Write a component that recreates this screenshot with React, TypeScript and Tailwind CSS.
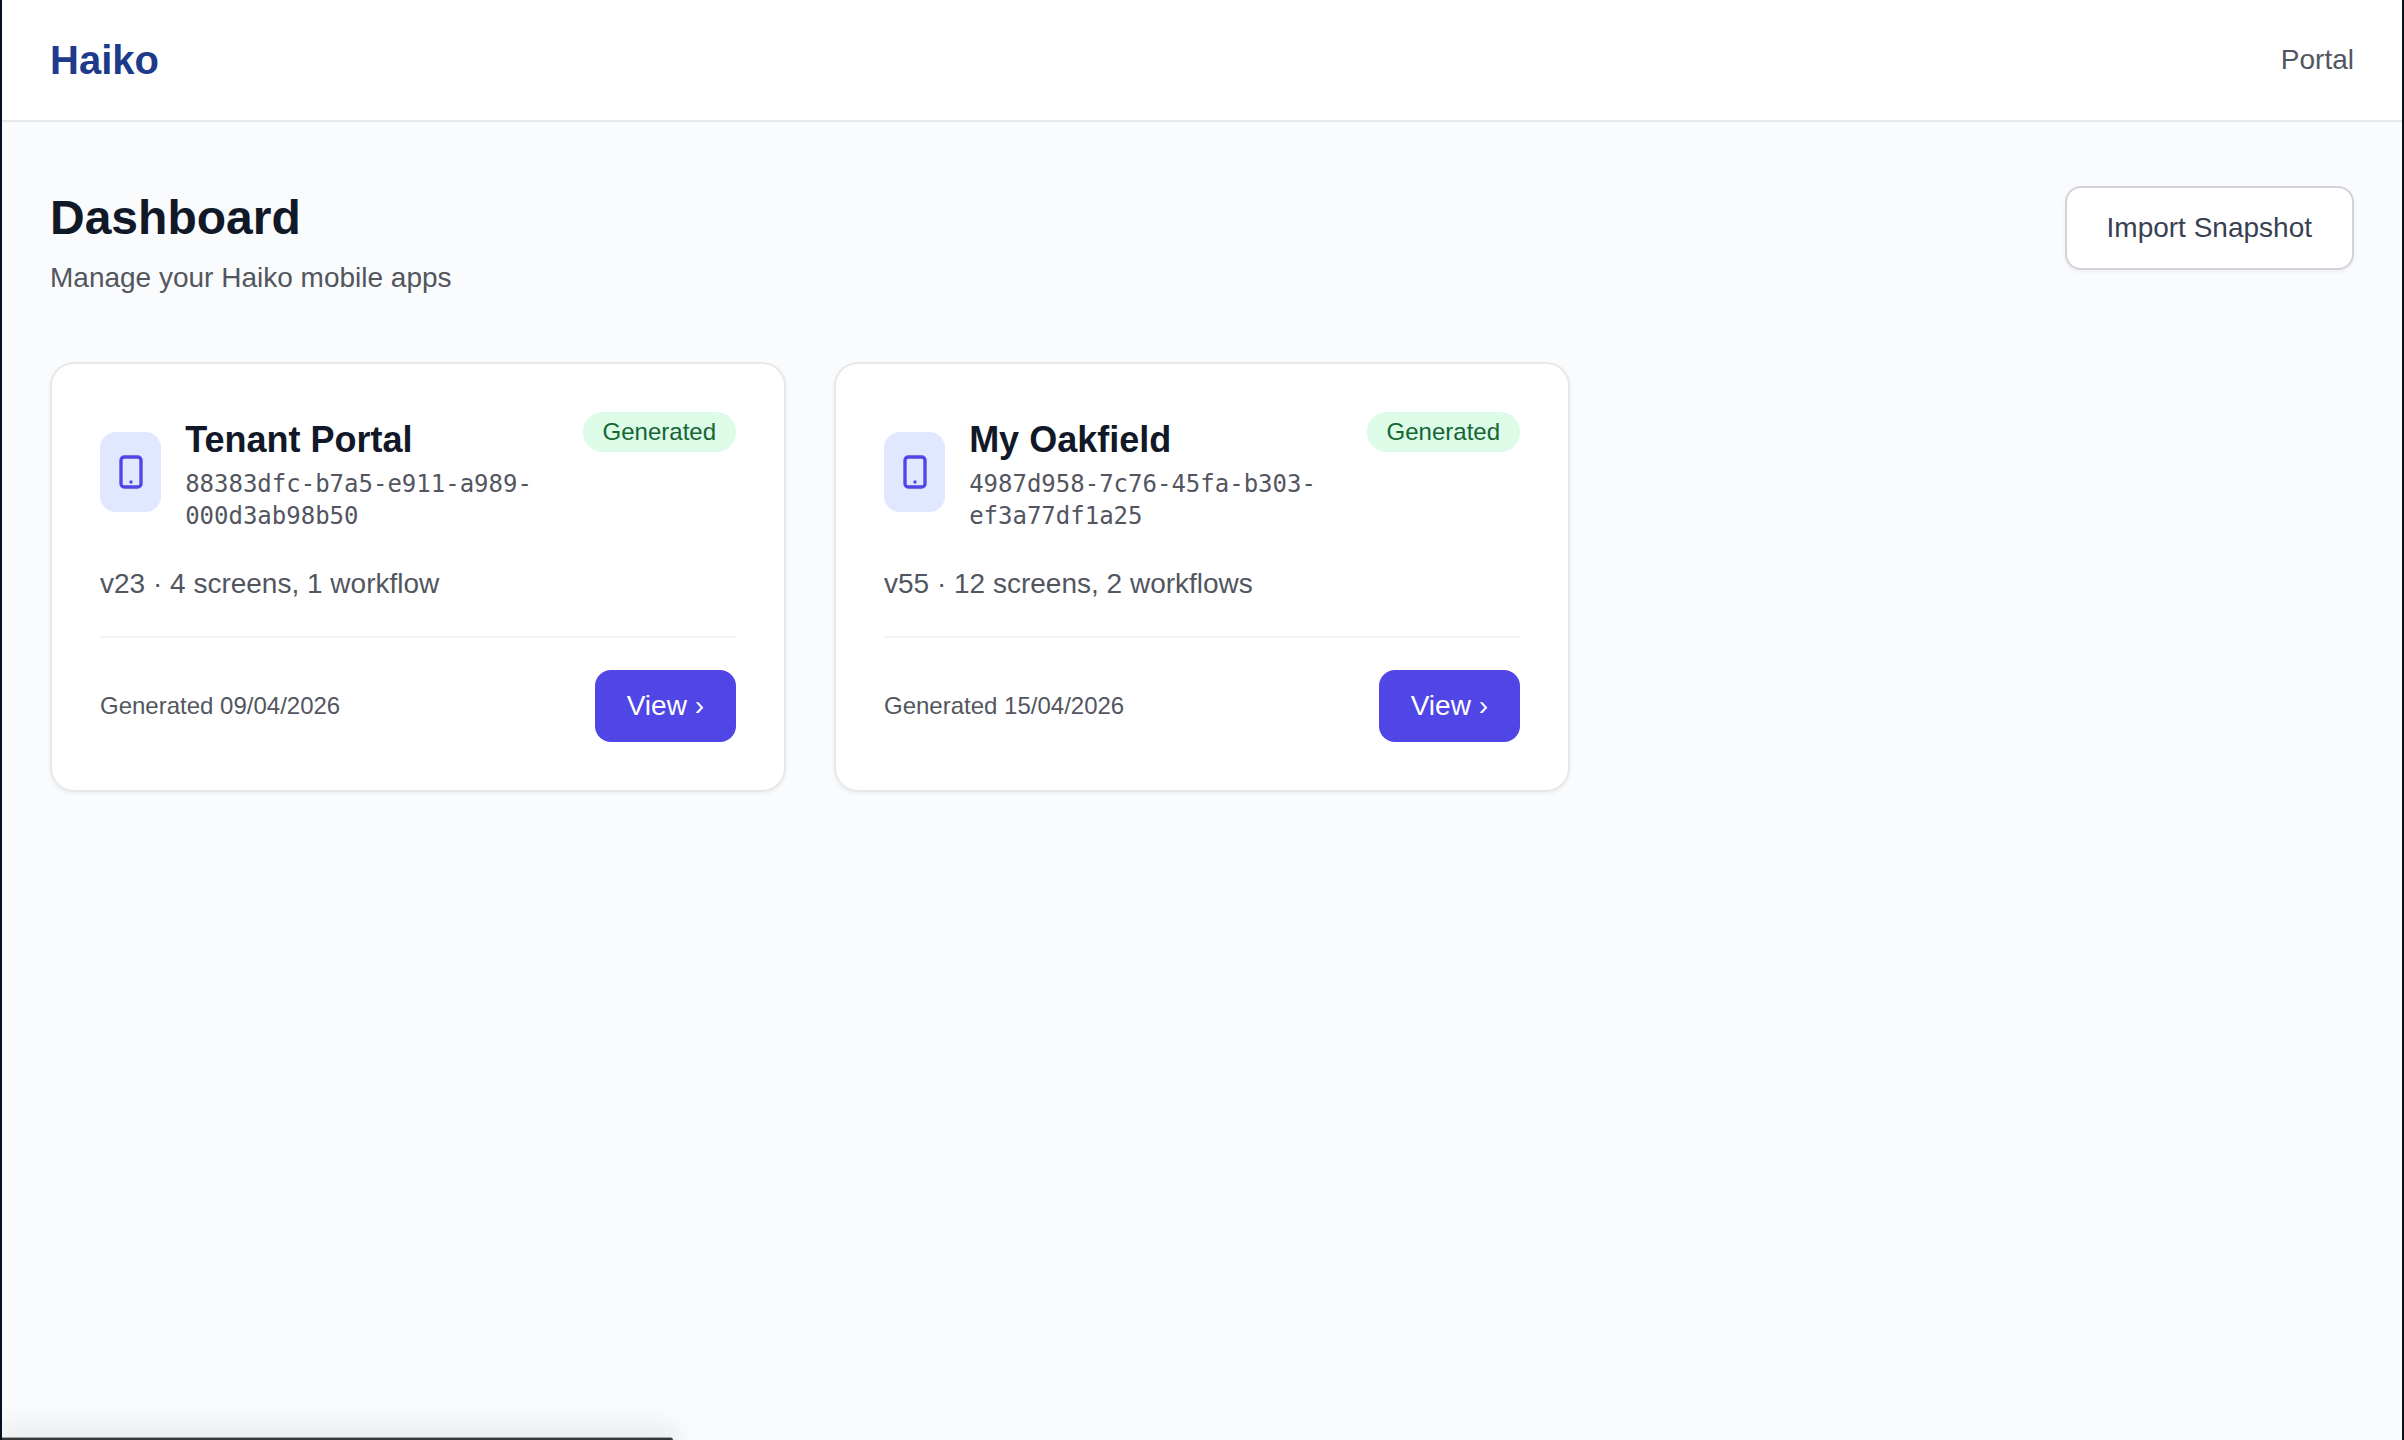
import * as React from "react";

interface AppInfo {
  name: string;
  id: string;
  version: number;
  summary: string;
  status: string;
  generatedOn: string;
}

const apps: AppInfo[] = [
  {
    name: "Tenant Portal",
    id: "88383dfc-b7a5-e911-a989-000d3ab98b50",
    version: 23,
    summary: "4 screens, 1 workflow",
    status: "Generated",
    generatedOn: "09/04/2026",
  },
  {
    name: "My Oakfield",
    id: "4987d958-7c76-45fa-b303-ef3a77df1a25",
    version: 55,
    summary: "12 screens, 2 workflows",
    status: "Generated",
    generatedOn: "15/04/2026",
  },
];

const PhoneIcon: React.FC = () => (
  <svg
    className="size-10 shrink-0 text-[#4f46e5]"
    viewBox="0 0 24 24"
    fill="none"
    stroke="currentColor"
    strokeWidth={2}
    strokeLinecap="round"
    strokeLinejoin="round"
    aria-hidden="true"
  >
    <path d="M12 18h.01M8 21h8a2 2 0 002-2V5a2 2 0 00-2-2H8a2 2 0 00-2 2v14a2 2 0 002 2z" />
  </svg>
);

const AppCard: React.FC<{ app: AppInfo }> = ({ app }) => (
  <article className="rounded-3xl border-2 border-[#e7e8ea] bg-white p-12 shadow-[0_2px_4px_rgba(0,0,0,0.05)]">
    <div className="flex items-start justify-between">
      <div className="flex items-center gap-6">
        <div className="flex h-20 w-20 items-center justify-center rounded-2xl bg-[#e0e7ff]">
          <PhoneIcon />
        </div>
        <div>
          <h2 className="text-[36px] leading-14 font-bold text-[#111827]">{app.name}</h2>
          <p className="font-['DejaVu_Sans_Mono',monospace] text-2xl leading-8 text-[#52565f]">{app.id}</p>
        </div>
      </div>
      <span className="rounded-full bg-[#dcfce7] px-5 py-1 text-2xl leading-8 text-[#166534]">{app.status}</span>
    </div>

    <p className="mt-8 text-[28px] leading-10 text-[#52565f]">
      v{app.version} · {app.summary}
    </p>

    <div className="mt-8 flex items-center justify-between border-t-2 border-[#f1f2f3] pt-8">
      <span className="text-2xl leading-8 text-[#52565f]">Generated {app.generatedOn}</span>
      <button type="button" className="rounded-2xl bg-[#4f46e5] px-8 py-4 text-[28px] leading-10 text-white">
        View ›
      </button>
    </div>
  </article>
);

export default function App() {
  return (
    <div className="relative min-h-screen overflow-hidden border-x-2 border-[#06121f] bg-[#fafbfd] font-['Liberation_Sans',Arial,sans-serif]">
      <header className="flex items-center justify-between border-b-2 border-[#e7e8ea] bg-white px-12 py-8">
        <a href="#" className="text-[40px] leading-14 font-bold text-[#1e3a8a]">
          Haiko
        </a>
        <nav>
          <a href="#" className="text-[28px] leading-10 text-[#52565f]">
            Portal
          </a>
        </nav>
      </header>

      <main className="px-12 py-16">
        <div className="mb-16 flex items-start justify-between">
          <div>
            <h1 className="text-5xl leading-16 font-bold text-[#111827]">Dashboard</h1>
            <p className="mt-2 text-[28px] leading-10 text-[#52565f]">Manage your Haiko mobile apps</p>
          </div>
          <button
            type="button"
            className="rounded-2xl border-2 border-[#d1d3d9] bg-white px-10 py-5 text-[28px] leading-10 text-[#374151] shadow-[0_2px_4px_rgba(0,0,0,0.05)]"
          >
            Import Snapshot
          </button>
        </div>

        <div className="grid grid-cols-3 gap-12">
          {apps.map((app) => (
            <AppCard key={app.id} app={app} />
          ))}
        </div>
      </main>

      {/* top edge of the browser status bar */}
      <div className="absolute bottom-0 left-0 h-[3px] w-[671px] rounded-tr-sm border-t border-[#a3a5a7] bg-[#33363a] shadow-[0_0_28px_6px_rgba(0,0,0,0.12)]" />
    </div>
  );
}
